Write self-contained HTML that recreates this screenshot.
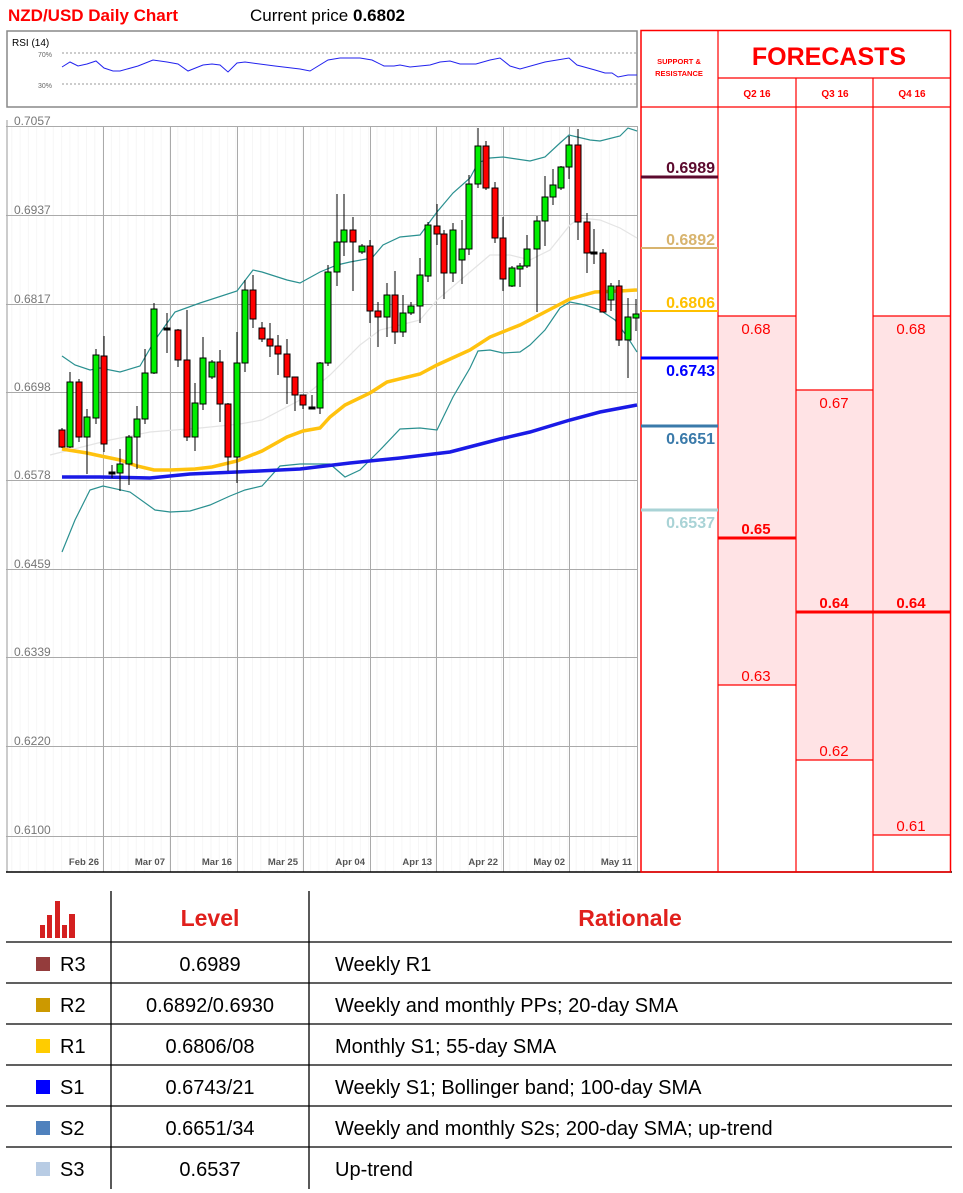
<!DOCTYPE html>
<html><head><meta charset="utf-8"><style>
body{margin:0;background:#fff;width:963px;height:1193px;overflow:hidden;font-family:"Liberation Sans",sans-serif}
svg{position:absolute;left:0;top:0}
</style></head><body>
<svg width="963" height="1193" viewBox="0 0 963 1193" xmlns="http://www.w3.org/2000/svg" font-family="Liberation Sans, sans-serif">
<defs>
<pattern id="mg" x="3" y="0" width="8.3" height="10" patternUnits="userSpaceOnUse"><line x1="0.5" y1="0" x2="0.5" y2="10" stroke="#f6f6f6" stroke-width="1"/></pattern>
</defs>
<text x="8" y="21" fill="#ff0000" font-size="17" font-weight="bold">NZD/USD Daily Chart</text>
<text x="250" y="21" fill="#000" font-size="17">Current price <tspan font-weight="bold">0.6802</tspan></text>
<rect x="7" y="31" width="630" height="76" fill="#fff" stroke="#888" stroke-width="1.5"/>
<text x="12" y="46" font-size="10" fill="#000">RSI (14)</text>
<text x="38" y="57" font-size="7" fill="#666">70%</text>
<text x="38" y="88" font-size="7" fill="#666">30%</text>
<line x1="62" y1="53" x2="637" y2="53" stroke="#777" stroke-dasharray="2,2" stroke-width="0.8"/>
<line x1="62" y1="84" x2="637" y2="84" stroke="#777" stroke-dasharray="2,2" stroke-width="0.8"/>
<polyline fill="none" stroke="#2222ee" stroke-width="1" points="62,67 70,62 78,66 87,64 96,61 104,68 113,71 120,71 138,66 153,60 167,62 178,64 188,71 203,65 212,64 220,65 228,72 237,63 245,62 275,66 300,69 310,71 328,60 340,58 360,58 372,60 384,66 394,66 400,65 410,67 420,66 430,65 440,62 450,61 460,64 476,64 490,60 500,58 510,66 520,69 545,62 569,58 577,65 595,70 605,73 612,73 618,77 628,75 637,75"/>
<rect x="7" y="126" width="630" height="746" fill="url(#mg)"/>
<line x1="7" y1="120" x2="7" y2="872" stroke="#ccc" stroke-width="2"/>
<g stroke="#aaa" stroke-width="1">
<line x1="6" y1="126.5" x2="637" y2="126.5"/><line x1="6" y1="215.5" x2="637" y2="215.5"/><line x1="6" y1="304.5" x2="637" y2="304.5"/><line x1="6" y1="392.5" x2="637" y2="392.5"/><line x1="6" y1="480.5" x2="637" y2="480.5"/><line x1="6" y1="569.5" x2="637" y2="569.5"/><line x1="6" y1="657.5" x2="637" y2="657.5"/><line x1="6" y1="746.5" x2="637" y2="746.5"/><line x1="6" y1="836.5" x2="637" y2="836.5"/>
<line x1="103.5" y1="126" x2="103.5" y2="872"/><line x1="170.5" y1="126" x2="170.5" y2="872"/><line x1="237.5" y1="126" x2="237.5" y2="872"/><line x1="303.5" y1="126" x2="303.5" y2="872"/><line x1="370.5" y1="126" x2="370.5" y2="872"/><line x1="436.5" y1="126" x2="436.5" y2="872"/><line x1="503.5" y1="126" x2="503.5" y2="872"/><line x1="569.5" y1="126" x2="569.5" y2="872"/><line x1="637.5" y1="126" x2="637.5" y2="872"/>
</g>
<g font-size="12" fill="#777">
<text x="14" y="125">0.7057</text><text x="14" y="214">0.6937</text><text x="14" y="303">0.6817</text><text x="14" y="391">0.6698</text><text x="14" y="479">0.6578</text><text x="14" y="568">0.6459</text><text x="14" y="656">0.6339</text><text x="14" y="745">0.6220</text><text x="14" y="834">0.6100</text>
</g>
<g font-size="9.5" fill="#555" font-weight="bold" text-anchor="end">
<text x="99" y="865">Feb 26</text><text x="165" y="865">Mar 07</text><text x="232" y="865">Mar 16</text><text x="298" y="865">Mar 25</text><text x="365" y="865">Apr 04</text><text x="432" y="865">Apr 13</text><text x="498" y="865">Apr 22</text><text x="565" y="865">May 02</text><text x="632" y="865">May 11</text>
</g>
<polyline fill="none" stroke="#e4e4e4" stroke-width="1.2" points="50,455 90,445 110,440 150,432 200,428 240,424 262,420 300,400 330,375 360,345 380,330 400,325 420,320 437,300 470,272 490,255 510,255 530,260 550,250 570,225 580,218 600,220 620,228 637,238"/>
<polyline fill="none" stroke="#2a9090" stroke-width="1.2" points="62,356 75,365 90,370 100,368 120,372 140,366 155,340 175,312 200,303 237,291 253,270 262,272 287,280 300,283 320,272 337,265 350,262 372,258 383,245 400,237 420,235 437,212 453,193 470,178 478,163 490,158 503,157 530,161 545,157 560,143 569,135 590,140 600,141 620,136 628,128 637,131"/>
<polyline fill="none" stroke="#2a9090" stroke-width="1.2" points="62,552 75,520 90,490 103,486 130,492 155,510 170,512 190,511 210,505 230,496 245,490 262,486 280,466 300,464 330,464 345,477 360,470 380,450 400,429 420,428 437,430 453,397 470,368 478,351 490,350 503,353 520,352 530,345 545,330 560,308 570,302 585,305 600,310 615,320 628,338 637,352"/>
<polyline fill="none" stroke="#ffc20e" stroke-width="3.5" points="62,449 87,453 96,455 120,460 137,466 154,470 170,470 195,469 212,467 237,461 262,451 287,437 303,431 320,428 330,417 345,405 370,393 387,382 420,374 437,365 470,350 490,337 520,325 545,312 570,299 595,292 620,291 637,290"/>
<polyline fill="none" stroke="#1a1ae6" stroke-width="3.5" points="62,477 100,477 150,478 190,474 237,472 300,469 350,463 400,458 450,452 500,439 530,432 570,420 600,412 637,405"/>
<g id="candles" stroke="#000" stroke-width="1"></g>
<line x1="6" y1="872" x2="952" y2="872" stroke="#000" stroke-width="1.5"/>
<rect x="718" y="316" width="78" height="369" fill="#ffe3e5"/>
<rect x="796" y="390" width="77" height="370" fill="#ffe3e5"/>
<rect x="873" y="316" width="77" height="519" fill="#ffe3e5"/>
<g stroke="#ff0000" stroke-width="1.2" fill="none">
<rect x="641" y="30.5" width="309.5" height="841.5" stroke-width="1.5"/>
<line x1="718" y1="30" x2="718" y2="872"/>
<line x1="796" y1="78" x2="796" y2="872"/>
<line x1="873" y1="78" x2="873" y2="872"/>
<line x1="718" y1="78" x2="950" y2="78"/>
<line x1="641" y1="107" x2="950" y2="107"/>
<line x1="718" y1="316" x2="796" y2="316"/>
<line x1="718" y1="685" x2="796" y2="685"/>
<line x1="718" y1="538" x2="796" y2="538" stroke-width="3"/>
<line x1="796" y1="390" x2="873" y2="390"/>
<line x1="796" y1="760" x2="873" y2="760"/>
<line x1="796" y1="612" x2="950" y2="612" stroke-width="3"/>
<line x1="873" y1="316" x2="950" y2="316"/>
<line x1="873" y1="835" x2="950" y2="835"/>
</g>
<g fill="#ff0000" text-anchor="middle">
<text x="679" y="64" font-size="7.5" font-weight="bold">SUPPORT &amp;</text>
<text x="679" y="76" font-size="7.5" font-weight="bold">RESISTANCE</text>
<text x="829" y="65" font-size="25" font-weight="bold">FORECASTS</text>
<text x="757" y="97" font-size="10" font-weight="bold">Q2 16</text>
<text x="835" y="97" font-size="10" font-weight="bold">Q3 16</text>
<text x="912" y="97" font-size="10" font-weight="bold">Q4 16</text>
<g font-size="15">
<text x="756" y="334">0.68</text><text x="756" y="681">0.63</text>
<text x="834" y="408">0.67</text><text x="834" y="756">0.62</text>
<text x="911" y="334">0.68</text><text x="911" y="831">0.61</text>
<text x="756" y="534" font-weight="bold">0.65</text>
<text x="834" y="608" font-weight="bold">0.64</text>
<text x="911" y="608" font-weight="bold">0.64</text>
</g>
</g>
<g font-size="16" font-weight="bold" text-anchor="end">
<line x1="641" y1="177" x2="718" y2="177" stroke="#5c0a2e" stroke-width="3"/>
<text x="715" y="173" fill="#5c0a2e">0.6989</text>
<line x1="641" y1="248" x2="718" y2="248" stroke="#d8b46e" stroke-width="2"/>
<text x="715" y="245" fill="#d8b46e">0.6892</text>
<line x1="641" y1="311" x2="718" y2="311" stroke="#ffc000" stroke-width="2"/>
<text x="715" y="308" fill="#ffc000">0.6806</text>
<line x1="641" y1="358" x2="718" y2="358" stroke="#0000ff" stroke-width="3"/>
<text x="715" y="376" fill="#0000ff">0.6743</text>
<line x1="641" y1="426" x2="718" y2="426" stroke="#3a7aaa" stroke-width="3"/>
<text x="715" y="444" fill="#3a7aaa">0.6651</text>
<line x1="641" y1="510" x2="718" y2="510" stroke="#a9d3d6" stroke-width="3"/>
<text x="715" y="528" fill="#a9d3d6">0.6537</text>
</g>
<g stroke="#000" stroke-width="1.3">
<line x1="6" y1="942" x2="952" y2="942"/><line x1="6" y1="983" x2="952" y2="983"/><line x1="6" y1="1024" x2="952" y2="1024"/><line x1="6" y1="1065" x2="952" y2="1065"/><line x1="6" y1="1106" x2="952" y2="1106"/><line x1="6" y1="1147" x2="952" y2="1147"/>
<line x1="111" y1="891" x2="111" y2="1189"/><line x1="309" y1="891" x2="309" y2="1189"/>
</g>
<g fill="#d42020">
<rect x="40" y="925" width="5" height="13"/><rect x="47" y="915" width="5" height="23"/><rect x="55" y="901" width="5" height="37"/><rect x="62" y="925" width="5" height="13"/><rect x="69" y="914" width="6" height="24"/>
</g>
<text x="210" y="926" text-anchor="middle" font-size="23" font-weight="bold" fill="#e0201c">Level</text>
<text x="630" y="926" text-anchor="middle" font-size="23" font-weight="bold" fill="#e0201c">Rationale</text>
<rect x="36" y="957" width="14" height="14" fill="#943c3c"/>
<rect x="36" y="998" width="14" height="14" fill="#cc9900"/>
<rect x="36" y="1039" width="14" height="14" fill="#ffcc00"/>
<rect x="36" y="1080" width="14" height="14" fill="#0000ff"/>
<rect x="36" y="1121" width="14" height="14" fill="#4f81bd"/>
<rect x="36" y="1162" width="14" height="14" fill="#b8cce4"/>
<g font-size="20" fill="#000">
<text x="60" y="971">R3</text><text x="60" y="1012">R2</text><text x="60" y="1053">R1</text><text x="60" y="1094">S1</text><text x="60" y="1135">S2</text><text x="60" y="1176">S3</text>
<g text-anchor="middle">
<text x="210" y="971">0.6989</text><text x="210" y="1012">0.6892/0.6930</text><text x="210" y="1053">0.6806/08</text><text x="210" y="1094">0.6743/21</text><text x="210" y="1135">0.6651/34</text><text x="210" y="1176">0.6537</text>
</g>
<text x="335" y="971">Weekly R1</text>
<text x="335" y="1012">Weekly and monthly PPs; 20-day SMA</text>
<text x="335" y="1053">Monthly S1; 55-day SMA</text>
<text x="335" y="1094">Weekly S1; Bollinger band; 100-day SMA</text>
<text x="335" y="1135">Weekly and monthly S2s; 200-day SMA; up-trend</text>
<text x="335" y="1176">Up-trend</text>
</g>
</svg>
<script>
var d=[[62,428,448,430,447,'r'],[70,372,448,382,447,'g'],[79,379,442,382,437,'r'],[87,409,474,417,437,'g'],[96,349,424,355,418,'g'],[104,336,452,356,444,'r'],[112,465,478,472,474,'k'],[120,449,491,464,473,'g'],[129,435,485,437,464,'g'],[137,406,469,419,437,'g'],[145,349,424,373,419,'g'],[154,303,374,309,373,'g'],[167,313,353,328,330,'k'],[178,329,367,330,360,'r'],[187,310,441,360,437,'r'],[195,383,451,403,437,'g'],[203,337,410,358,404,'g'],[212,360,379,362,377,'g'],[220,350,422,362,404,'r'],[228,403,471,404,457,'r'],[237,332,483,363,457,'g'],[245,280,372,290,363,'g'],[253,275,328,290,319,'r'],[262,322,342,328,339,'r'],[270,323,357,339,346,'r'],[278,335,375,346,354,'r'],[287,339,404,354,377,'r'],[295,377,411,377,395,'r'],[303,395,409,395,405,'r'],[312,395,409,407,409,'k'],[320,362,414,363,408,'g'],[328,265,366,272,363,'g'],[337,194,286,242,272,'g'],[344,194,256,230,242,'g'],[353,217,291,230,242,'r'],[362,244,254,246,252,'g'],[370,240,323,246,311,'r'],[378,302,347,311,317,'r'],[387,283,337,295,317,'g'],[395,271,344,295,332,'r'],[403,295,337,313,332,'g'],[411,302,315,306,313,'g'],[420,258,323,275,306,'g'],[428,222,282,225,276,'g'],[437,204,245,226,234,'r'],[444,230,299,234,273,'r'],[453,223,282,230,273,'g'],[462,220,284,249,260,'g'],[469,175,255,184,249,'g'],[478,128,188,146,184,'g'],[486,141,190,146,188,'r'],[495,182,243,188,238,'r'],[503,217,291,238,279,'r'],[512,266,287,268,286,'g'],[520,263,287,266,269,'g'],[527,235,268,249,266,'g'],[537,216,312,221,249,'g'],[545,176,246,197,221,'g'],[553,169,205,185,197,'g'],[561,166,190,167,188,'g'],[569,136,179,145,167,'g'],[578,129,240,145,222,'r'],[587,213,273,222,253,'r'],[594,229,264,252,254,'k'],[603,249,312,253,312,'r'],[611,283,311,286,300,'g'],[619,280,346,286,340,'r'],[628,298,378,317,340,'g'],[636,299,331,314,318,'g']];
var g=document.getElementById('candles'),s='';
d.forEach(function(c){var col=c[5]=='g'?'#00ee00':c[5]=='r'?'#ff0000':'#000';
s+='<line x1="'+c[0]+'" x2="'+c[0]+'" y1="'+c[1]+'" y2="'+c[2]+'"/>';
s+='<rect x="'+(c[0]-3)+'" y="'+c[3]+'" width="6" height="'+Math.max(1,c[4]-c[3])+'" fill="'+col+'"/>';});
g.innerHTML=s;
</script>
</body></html>
